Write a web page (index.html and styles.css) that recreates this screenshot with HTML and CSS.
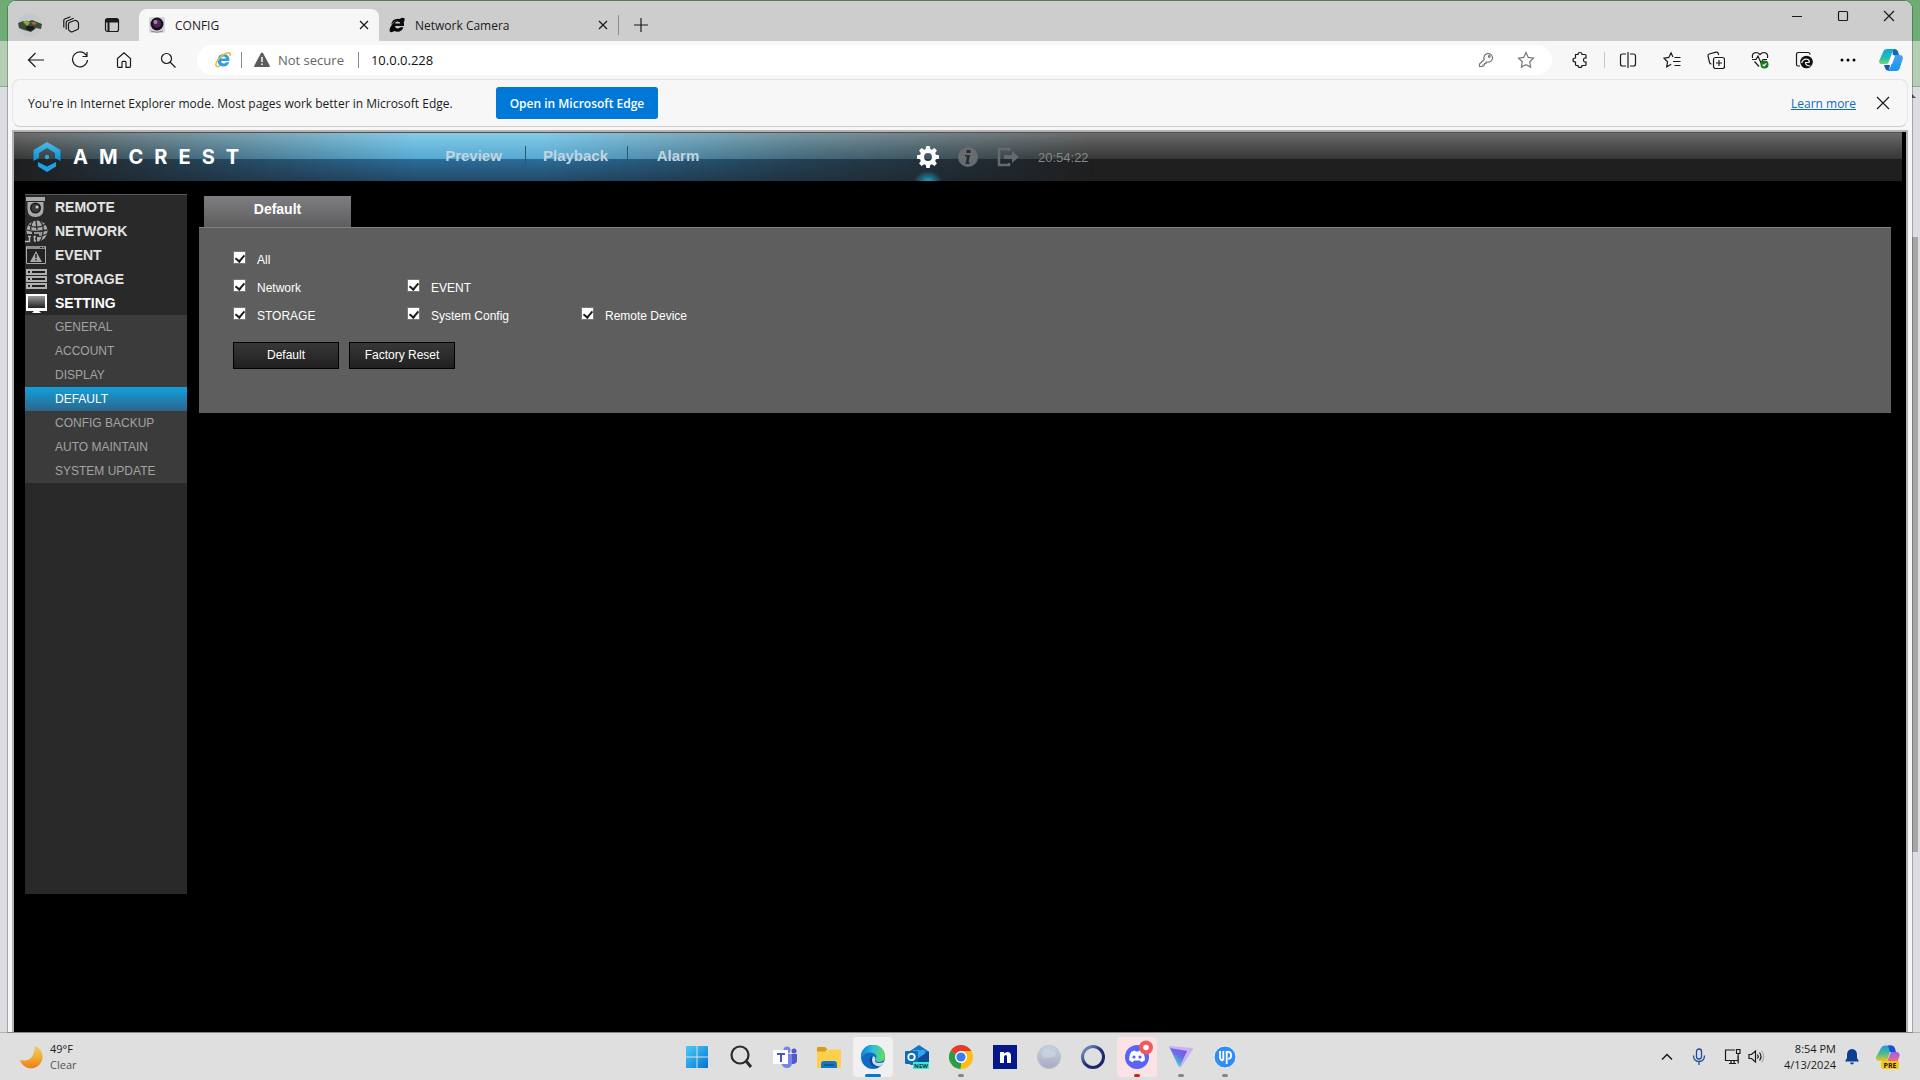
FILE: index.html
```html
<!DOCTYPE html>
<html lang="en">
<head>
<meta charset="utf-8">
<title>CONFIG</title>
<link rel="stylesheet" href="styles.css">
</head>
<body>
<div class="desktop">
  <div class="back-thumb"></div>
  <div class="back-arrow"></div>
  <main class="window">
    <header class="tabstrip">
      <button class="strip-btn" aria-label="Profile"><svg width="24" height="24" viewBox="0 0 24 24"><circle cx="12" cy="12" r="12" fill="#c3c8cc"/><path d="M0 10l5-2 4 1 5-2 5 2 5 2-1 5-5-1-5 4-7-2-5-2z" fill="#3d4a35"/><path d="M5 9l4-2 3 3-3 3z" fill="#8fa343"/><path d="M8 13h7l2 3-5 2-4-2z" fill="#181b1a"/><path d="M13 9h4l2 2-4 1z" fill="#a5673f"/></svg></button>
      <button class="strip-btn" aria-label="Workspaces"><svg class="line" width="18" height="18" viewBox="0 0 18 18"><path d="M6.500 8q0-1 1-1.500l5-2q1.200-.3 2 .3l1.200 1q.8.600.8 1.700V12q0 1-1 1.500l-5 2.300q-1 .4-2-.3l-1.200-.9q-.8-.6-.8-1.600zM4.200 13.500V6.500q0-1 1-1.500l6.500-2.800M1.800 11.500V4.500q0-1 1-1.500L8.500.8"/></svg></button>
      <button class="strip-btn" aria-label="Tab actions"><svg class="line" width="16" height="16" viewBox="0 0 16 16"><rect x="1.500" y="1.500" width="13" height="13" rx="2"/><path d="M1.500 3h13M1.500 4.500h13M4.500 5v9.500" stroke-width="2"/></svg></button>
      <div class="tab tab-active">
        <svg width="16" height="16" viewBox="0 0 16 16"><rect width="16" height="16" rx="2" fill="#d6d6da"/><circle cx="8" cy="7" r="6.500" fill="#16131b"/><circle cx="8" cy="6.500" r="4" fill="#4c2458"/><circle cx="6.500" cy="5" r="2" fill="#b47bb8"/><path d="M2 14q6 2.500 12 0" stroke="#888" fill="none"/></svg>
        <span class="tab-title">CONFIG</span>
        <button class="tab-close" aria-label="Close tab"><svg class="line" width="10" height="10" viewBox="0 0 10 10"><path d="M1 1l8 8M9 1l-8 8"/></svg></button>
      </div>
      <div class="tab">
        <svg width="16" height="16" viewBox="0 0 16 16"><path d="M14.800 9H6q.3 2.500 2.700 2.500 1.500 0 2.300-1.200h3.500Q12.800 14.700 8.600 14.700q-2 0-3.300-.8Q1.700 16 .8 14.500-.2 12 3 7.500 6 3.800 9 2.800 5.200 4 2.200 7.800 3 1.700 8.800 1.700q.8 0 1.600.2Q14.500-.2 15.500 1.500q.6 1.400-.8 3.800.6 1.600.1 3.700zM6 6.500h5.300Q11 4.500 8.700 4.500 6.500 4.500 6 6.500z" fill="#0a0a0a"/></svg>
        <span class="tab-title">Network Camera</span>
        <button class="tab-close" aria-label="Close tab"><svg class="line" width="10" height="10" viewBox="0 0 10 10"><path d="M1 1l8 8M9 1l-8 8"/></svg></button>
      </div>
      <button class="new-tab" aria-label="New tab"><svg class="line" width="16" height="16" viewBox="0 0 16 16"><path d="M8 1v14M1 8h14"/></svg></button>
      <div class="window-controls">
        <button aria-label="Minimize"><svg class="line" width="12" height="12" viewBox="0 0 12 12"><path d="M1 6.500h10"/></svg></button>
        <button aria-label="Maximize"><svg class="line" width="12" height="12" viewBox="0 0 12 12"><rect x="1.500" y="1.500" width="9" height="9" rx="1"/></svg></button>
        <button aria-label="Close"><svg class="line" width="12" height="12" viewBox="0 0 12 12"><path d="M1 1l10 10M11 1L1 11"/></svg></button>
      </div>
    </header>

    <nav class="toolbar">
      <button class="tool" aria-label="Back"><svg class="line" width="18" height="18" viewBox="0 0 18 18"><path d="M17 9H2M8.500 2L1.500 9l7 7"/></svg></button>
      <button class="tool" aria-label="Refresh"><svg class="line" width="18" height="18" viewBox="0 0 18 18"><path d="M15.500 4.500A7.500 7.500 0 1 0 16.500 9M16 1v4.500h-4.500"/></svg></button>
      <button class="tool" aria-label="Home"><svg class="line" width="18" height="18" viewBox="0 0 18 18"><path d="M2.500 7.500L9 1.800l6.500 5.700v8q0 .8-.8.800H11v-5q0-1-1-1H8q-1 0-1 1v5H3.300q-.8 0-.8-.8z"/></svg></button>
      <button class="tool" aria-label="Search"><svg class="line" width="18" height="18" viewBox="0 0 18 18"><circle cx="7.500" cy="7.500" r="5"/><path d="M11 11l5.500 5.500"/></svg></button>
      <div class="address">
        <svg width="16" height="16" viewBox="0 0 16 16"><path d="M14.500 9H6q.3 2.500 2.700 2.500 1.500 0 2.300-1.200h3.300Q12.800 14.500 8.600 14.500 2.600 14.500 2.600 8.200 3 2 8.700 2q6.200.4 5.800 7zM6 6.600h5Q10.800 4.600 8.600 4.600 6.400 4.600 6 6.600z" fill="#2f9fe0"/><path d="M14.800 4Q16 .8 13.500.8 9.500 1 5 5.500 .7 10 .8 13.200q.5 2.300 4 .8" fill="none" stroke="#f2b632" stroke-width="1.500"/></svg>
        <span class="bar"></span>
        <svg class="warn" width="16" height="16" viewBox="0 0 16 16"><path d="M8 .5q.7 0 1 .6l6.800 12.600q.5 1.300-.8 1.300H1Q-.3 15 .2 13.700L7 1.100Q7.300.5 8 .5z" fill="#5c5c5c"/><path d="M8 5v5M8 11.500v1.500" stroke="#fff" stroke-width="1.500"/></svg>
        <span class="secure">Not secure</span>
        <span class="bar"></span>
        <input class="url" type="text" value="10.0.0.228" aria-label="Address">
        <button class="pill-btn" aria-label="Passwords"><svg class="line dim" width="16" height="16" viewBox="0 0 16 16"><path d="M6.200 7.500A4.300 4.300 0 1 1 9 10H8v1.500H6.500V13H5v1.500H1.500V12z"/><circle cx="11.300" cy="4.500" r=".8"/></svg></button>
        <button class="pill-btn" aria-label="Add to favorites"><svg class="line dim" width="18" height="18" viewBox="0 0 18 18"><path d="M9 1.500l2.300 4.900 5.200.7-3.800 3.700.9 5.300L9 13.600l-4.600 2.500.9-5.300L1.500 7.100l5.200-.7z"/></svg></button>
      </div>
      <button class="tool tool-ext" aria-label="Extensions"><svg class="line" width="18" height="18" viewBox="0 0 18 18"><path d="M4.500 3.500H7Q7 1.500 9 1.500t2 2h3q1 0 1 1V7Q12.500 6.700 12.500 9t2.500 2v2.500q0 1-1 1h-3q0 2-2 2t-2-2H5.500q-1 0-1-1V11Q2 11 2 9t2.500-2z"/></svg></button>
      <span class="bar bar-light"></span>
      <button class="tool" aria-label="Split screen"><svg class="line" width="18" height="18" viewBox="0 0 18 18"><path d="M7 3H3.500q-2 0-2 2v8q0 2 2 2H7M11 3h3.500q2 0 2 2v8q0 2-2 2H11M9 1v16"/></svg></button>
      <button class="tool" aria-label="Favorites"><svg class="line" width="18" height="18" viewBox="0 0 18 18"><path d="M10 6L8 1.800 5.800 6.400 1 7.200l3.500 3.600-.8 5 4.500-2.500M11.500 6.500h6M10 10.500h7.500M11.500 14.500h6"/></svg></button>
      <button class="tool" aria-label="Collections"><svg class="line" width="18" height="18" viewBox="0 0 18 18"><rect x="6.500" y="6.500" width="11" height="11" rx="2"/><path d="M12 9v6M9 12h6M4.500 13Q3 13 2.500 11.500L1 5Q.8 3.500 2.200 3L9 1.200q1.700-.2 2.200 1L11.700 4"/></svg></button>
      <button class="tool" aria-label="Browser essentials"><svg class="line" width="18" height="18" viewBox="0 0 18 18"><path d="M1.500 7Q.5 2 5 1.500q2.300 0 4 2 1.700-2 4-2Q17.500 2 16.500 7M1 8.500h4L7 5l3 7 2-3.500h4M3.500 10.500L8 15.500"/><circle cx="13.500" cy="13.500" r="4" fill="#187a1c" stroke="none"/><path d="M11.700 13.500l1.300 1.300 2.300-2.500" stroke="#fff"/></svg></button>
      <button class="tool" aria-label="Internet Explorer mode"><svg class="line" width="18" height="18" viewBox="0 0 18 18"><path d="M5 15H3q-1.500 0-1.500-1.500v-10Q1.500 1.500 3.500 1.500h9.500q2 0 2 2"/><circle cx="11.500" cy="11" r="6.300" fill="#111" stroke="none"/><path d="M6.500 12Q8.500 7 13 8.500q2 1.500 1 3h-3.500q0 3.500 5 3.500" stroke="#f7f7f7" stroke-width="1.200"/></svg></button>
      <button class="tool" aria-label="Settings and more"><svg width="18" height="18" viewBox="0 0 18 18"><circle cx="3" cy="9" r="1.500"/><circle cx="9" cy="9" r="1.500"/><circle cx="15" cy="9" r="1.500"/></svg></button>
      <button class="tool tool-last" aria-label="Copilot"><svg width="24" height="24" viewBox="0 0 24 24"><defs><linearGradient id="cpa" x1="0" y1="0" x2="0" y2="1"><stop offset="0" stop-color="#09a9dc"/><stop offset=".6" stop-color="#27bdb0"/><stop offset="1" stop-color="#74d678"/></linearGradient><linearGradient id="cpb" x1="0" y1="0" x2="0" y2="1"><stop offset="0" stop-color="#4aa0ea"/><stop offset="1" stop-color="#1595f5"/></linearGradient></defs><path d="M13 1h3q2 0 3 2.500L20 7h-6z" fill="#1565b8"/><path d="M4 4q1-3 4-3h8q-2 .5-2.800 3L11 12q-1 4-4 4H3Q-.5 16 .3 12.500z" fill="url(#cpa)"/><path d="M5 17h6l-1 5.500Q7 23 6 20z" fill="#1855c5"/><path d="M15.500 7H21q3.500.5 2.700 4L21 19.500q-1 3.500-4 3.500H8q2.500-.5 3.300-3.500z" fill="url(#cpb)"/><path d="M12 8h4l-3 8H9z" fill="#fff"/></svg></button>
    </nav>

    <section class="infobar">
      <span>You're in Internet Explorer mode. Most pages work better in Microsoft Edge.</span>
      <button class="open-edge">Open in Microsoft Edge</button>
      <a class="learn" href="#">Learn more</a>
      <button class="info-close" aria-label="Dismiss"><svg class="line" width="14" height="14" viewBox="0 0 14 14"><path d="M1 1l12 12M13 1L1 13"/></svg></button>
    </section>

    <div class="page">
      <header class="cam-header">
        <svg class="cam-mark" width="28" height="30" viewBox="0 0 28 30"><defs><linearGradient id="am" x1="0" y1="0" x2="0" y2="1"><stop offset="0" stop-color="#4cbce8"/><stop offset="1" stop-color="#0a8fd4"/></linearGradient></defs><path d="M.5 19V8L14 0l13.500 8v11L22 16v-5l-8-5-8 5v5z" fill="url(#am)"/><path d="M5 20l9 4.500L23 20v4.500L14 30l-9-5.500z" fill="#1ca0e2"/><circle cx="14" cy="15" r="2.200" fill="#29a8e0"/></svg>
        <span class="cam-name">AMCREST</span>
        <nav class="cam-nav"><a href="#">Preview</a><a href="#">Playback</a><a href="#">Alarm</a></nav>
        <div class="cam-tools">
          <button class="gear" aria-label="Setup"><svg width="22" height="22" viewBox="0 0 22 22"><path fill="#fff" fill-rule="evenodd" d="M9.300 0h3.400l.5 3 1.700.7L17.400 2l2.500 2.500-1.700 2.600.7 1.600 3.100.6v3.400l-3.100.6-.7 1.600 1.700 2.600-2.500 2.500-2.500-1.700-1.700.7-.5 3H9.300l-.5-3-1.700-.7L4.600 20l-2.500-2.500 1.700-2.600-.7-1.600-3.100-.6V9.300l3.100-.6.700-1.600L2.100 4.500 4.600 2l2.500 1.700L8.800 3zM11 7a4 4 0 1 0 0 8 4 4 0 0 0 0-8z"/></svg></button>
          <button aria-label="Information"><svg width="20" height="20" viewBox="0 0 20 20"><circle cx="10" cy="10" r="10" fill="#676c71"/><path d="M8.500 3h4v3h-4zM7 8h5l-1.500 7H12l-1 2H7.500L9 9.500H7z" fill="#262c33"/></svg></button>
          <button aria-label="Logout"><svg width="22" height="20" viewBox="0 0 22 20"><path d="M12 4V2H2v16h10v-2" fill="none" stroke="#666a6e" stroke-width="2.500"/><path d="M7 8h8V4l7 6-7 6v-4H7z" fill="#666a6e"/></svg></button>
          <span class="clock">20:54:22</span>
        </div>
      </header>

      <div class="cam-body">
        <aside class="side">
          <ul class="side-main">
            <li><a href="#"><svg width="24" height="24" viewBox="0 0 24 24"><path d="M1 2h19v4H1z" fill="#a9a9a9"/><path d="M2.500 7h16v7q0 8-8 8t-8-8z" fill="#a9a9a9"/><circle cx="10.500" cy="13" r="5.500" fill="#1c1c1c"/><circle cx="10.500" cy="13" r="4" fill="#3b3b3b"/><circle cx="12" cy="12" r="1.500" fill="#ccc"/></svg>REMOTE</a></li>
            <li><a href="#"><svg width="24" height="24" viewBox="0 0 24 24"><circle cx="12" cy="12" r="10.500" fill="#a9a9a9"/><path d="M4 6q8 5 17-1M2 11q9 3 20 0M8 2q-3 5-2 9M15 2q4 4 3 11t-3 9M11 1l1 10M17 17l5-2" stroke="#2a2a2a" stroke-width="1.300" fill="none"/><path d="M0 15h7v-3h9v6h-4v6H0z" fill="#2a2a2a"/><path d="M0 22.500h4.500V18M11 22h-1.500v-5M3 17.500h3M8.500 17.500H11M9 14h6v3" stroke="#b5b5b5" stroke-width="1.500" fill="none"/></svg>NETWORK</a></li>
            <li><a href="#"><svg width="24" height="24" viewBox="0 0 24 24"><path d="M1.500 3.500h19v17h-19z" fill="#222" stroke="#a9a9a9"/><path d="M2 3h18v3H2z" fill="#8e8e8e"/><path d="M15 4h2v1h-2zM18 4h1v1h-1z" fill="#222"/><path d="M11 8l6 11H5z" fill="#a9a9a9"/><path d="M11 11v4M11 16v1.500" stroke="#222" stroke-width="1.500"/></svg>EVENT</a></li>
            <li><a href="#"><svg width="24" height="24" viewBox="0 0 24 24"><path d="M1 2h21v6H1zM1 9h21v6H1zM1 16h21v6H1z" fill="#b0b0b0"/><path d="M3 4h2v2H3zM7 4h13v2H7zM3 11h2v2H3zM7 11h13v2H7zM3 18h2v2H3zM7 18h13v2H7z" fill="#1d1d1d"/></svg>STORAGE</a></li>
            <li><a class="on" href="#"><svg width="24" height="24" viewBox="0 0 24 24"><defs><linearGradient id="mon" x1="0" y1="0" x2="0" y2="1"><stop offset="0" stop-color="#9a9a9a"/><stop offset="1" stop-color="#222"/></linearGradient></defs><path d="M1 3h21v17H1z" fill="#fff"/><path d="M3 5h17v12H3z" fill="url(#mon)"/><path d="M9 20h5l2 2H7z" fill="#fff"/></svg>SETTING</a></li>
          </ul>
          <ul class="side-sub">
            <li><a href="#">GENERAL</a></li>
            <li><a href="#">ACCOUNT</a></li>
            <li><a href="#">DISPLAY</a></li>
            <li><a class="on" href="#">DEFAULT</a></li>
            <li><a href="#">CONFIG BACKUP</a></li>
            <li><a href="#">AUTO MAINTAIN</a></li>
            <li><a href="#">SYSTEM UPDATE</a></li>
          </ul>
        </aside>
        <section class="content">
          <h1 class="content-tab">Default</h1>
          <form class="panel">
            <div class="row"><label><input type="checkbox" checked>All</label></div>
            <div class="row"><label><input type="checkbox" checked>Network</label><label><input type="checkbox" checked>EVENT</label></div>
            <div class="row"><label><input type="checkbox" checked>STORAGE</label><label><input type="checkbox" checked>System Config</label><label><input type="checkbox" checked>Remote Device</label></div>
            <div class="actions"><button type="button">Default</button><button type="button">Factory Reset</button></div>
          </form>
        </section>
      </div>
    </div>
  </main>
</div>

<footer class="taskbar">
  <div class="weather">
    <svg width="24" height="24" viewBox="0 0 24 24"><defs><linearGradient id="mo" x1="0" y1="0" x2="0" y2="1"><stop offset="0" stop-color="#f5c66a"/><stop offset=".5" stop-color="#efb131"/><stop offset="1" stop-color="#ee7a1c"/></linearGradient></defs><path d="M16 1a11.500 11.500 0 1 1-15 14Q15 18 16 1z" fill="url(#mo)"/></svg>
    <div class="weather-text"><span>49°F</span><span class="muted">Clear</span></div>
  </div>
  <div class="apps">
    <button aria-label="Start"><svg width="24" height="24" viewBox="0 0 24 24"><defs><linearGradient id="wi" gradientUnits="userSpaceOnUse" x1="0" y1="0" x2="24" y2="24"><stop offset="0" stop-color="#4fd0fb"/><stop offset="1" stop-color="#0070cf"/></linearGradient></defs><path d="M1 1h10.500v10.500H1zM12.500 1H23v10.500H12.500zM1 12.500h10.500V23H1zM12.500 12.500H23V23H12.500z" fill="url(#wi)"/></svg></button>
    <button aria-label="Search"><svg width="24" height="24" viewBox="0 0 24 24" fill="none" stroke="#2b2b2b" stroke-width="2.200"><circle cx="11" cy="10" r="8.500"/><path d="M17 16l5 6" stroke-width="3"/></svg></button>
    <button aria-label="Teams"><svg width="26" height="24" viewBox="0 0 26 24"><circle cx="15" cy="5" r="3.500" fill="#7b83eb"/><circle cx="22" cy="6" r="2.500" fill="#5059c9"/><path d="M18 9h7v6q0 4-4 4h-3z" fill="#5059c9"/><path d="M10 9h10v8q0 6-5 6t-6-6z" fill="#7b83eb"/><path d="M1 5h15v14H1z" fill="#fff"/><path d="M5 8h8v2h-3v7H8v-7H5z" fill="#4b53bc"/></svg></button>
    <button aria-label="File Explorer"><svg width="26" height="24" viewBox="0 0 26 24"><path d="M1 3q0-1 1-1h7l3 3h-2v4H1z" fill="#d79b14"/><path d="M1 6.500h10l2-2h11q1 0 1 1V22q0 1-1 1H2q-1 0-1-1z" fill="#fcd04a"/><path d="M5 23v-4q0-3 3-3h10q3 0 3 3v4z" fill="#1178c8"/><path d="M8 19h10v2H8z" fill="#0c5a9c"/></svg></button>
    <button class="current run" aria-label="Microsoft Edge"><svg width="24" height="24" viewBox="0 0 24 24"><defs><linearGradient id="ed" x1="0" y1=".3" x2="1" y2=".4"><stop offset="0" stop-color="#0d7fd6"/><stop offset=".5" stop-color="#2fc2d8"/><stop offset="1" stop-color="#65dc59"/></linearGradient></defs><circle cx="12" cy="12" r="12" fill="#0f6cc4"/><path d="M0 12A12 12 0 0 1 24 11q0 6-6.500 6-4-.5-3-3 1.500-2 .5-4-2-3-7-2.500T0 14z" fill="url(#ed)"/><path d="M15.500 17.500q4 1.500 7.500-1-2.500 5-7 6-7-1-7.500-7Q8.500 12 12 10.500 9.500 16 15.500 17.500z" fill="#0d4b94"/><path d="M12 11q3 1 2 4-.5 2 2.500 3 4 .5 7-1.500-2 4-5 5-8-1-7.500-7z" fill="#eef5fa" opacity=".85"/></svg></button>
    <button aria-label="Outlook"><svg width="26" height="24" viewBox="0 0 26 24"><path d="M6 6l9-6 9 6v14H6z" fill="#1275c9"/><path d="M9 5h12v9H9z" fill="#2fa5ec"/><path d="M13 14L25 6v11H13z" fill="#0e4c96"/><rect x="1" y="6" width="13" height="13" rx="1" fill="#0f6cbd"/><circle cx="7.500" cy="12" r="3.200" fill="none" stroke="#fff" stroke-width="1.800"/><path d="M9 17h16v7H9z" fill="#3fe5df"/><text x="10" y="23" font-size="6" font-weight="700" font-family="Open Sans, sans-serif" fill="#0b3533">NEW</text></svg></button>
    <button class="run" aria-label="Chrome"><svg width="24" height="24" viewBox="0 0 24 24"><circle cx="12" cy="12" r="12" fill="#fbbf16"/><path d="M12 12L1.600 6A12 12 0 0 1 22.400 6z" fill="#e33b2e"/><path d="M12 12l0 12A12 12 0 0 1 1.600 6z" fill="#2a9d4a"/><path d="M12 6h10.400L18 15l-6 9-1-1 6-9z" fill="#fbbf16"/><circle cx="12" cy="12" r="6" fill="#fff"/><circle cx="12" cy="12" r="4.600" fill="#3b7ded"/></svg></button>
    <button aria-label="N app"><svg width="24" height="24" viewBox="0 0 24 24"><path d="M0 0h24v24H0z" fill="#04188c"/><path d="M7 18V7h4v1.500Q12.500 7 14.500 7q3.500 0 3.500 4v7h-4v-6.500Q14 10 12.700 10T11 11.800V18z" fill="#fff"/></svg></button>
    <button aria-label="Moon app"><svg width="24" height="24" viewBox="0 0 24 24"><defs><linearGradient id="pl" x1="0" y1="0" x2="0" y2="1"><stop offset="0" stop-color="#c5d5e2"/><stop offset="1" stop-color="#aaa9c2"/></linearGradient></defs><circle cx="12" cy="12" r="11.500" fill="url(#pl)" stroke="#b6c0cb"/><path d="M5 7q4-4 7-2t6 2q2 4-2 5T8 13 5 7z" fill="#d8e3ea" opacity=".4"/></svg></button>
    <button aria-label="Ring app"><svg width="24" height="24" viewBox="0 0 24 24"><defs><linearGradient id="rg" x1="0" y1="0" x2="1" y2="1"><stop offset="0" stop-color="#7fa7d0"/><stop offset=".5" stop-color="#25307a"/><stop offset="1" stop-color="#181c6a"/></linearGradient></defs><circle cx="12" cy="12" r="10.500" fill="none" stroke="url(#rg)" stroke-width="3"/></svg></button>
    <button class="alert run" aria-label="Discord"><svg width="40" height="40" viewBox="0 0 40 40"><circle cx="20" cy="20" r="12" fill="#5865f2"/><path d="M14 15q2-1.500 4-1.500l.5 1h3l.5-1q2 0 4 1.500 2 4 2 8-2 2-4 2l-1-1.500h-6L16 25q-2 0-4-2 0-4 2-8z" fill="#fff"/><circle cx="17" cy="20" r="1.600" fill="#5865f2"/><circle cx="23" cy="20" r="1.600" fill="#5865f2"/><circle cx="29" cy="10.500" r="7" fill="#f05a5a"/><circle cx="29" cy="10.500" r="2.800" fill="#fff"/></svg></button>
    <button class="run" aria-label="VPN"><svg width="24" height="24" viewBox="0 0 24 24"><defs><linearGradient id="vp" x1="1" y1="0" x2=".3" y2="1"><stop offset="0" stop-color="#8b45e8"/><stop offset=".5" stop-color="#6770e6"/><stop offset="1" stop-color="#45e3c8"/></linearGradient></defs><path d="M0 2q0-1 1-1l22 2q1.500.5.700 2L12 22q-1 1.500-2 0z" fill="#c9b1f2"/><path d="M1 3l17 3-7 15q-1 1-2-1z" fill="url(#vp)"/></svg></button>
    <button class="run" aria-label="IP utility"><svg width="24" height="24" viewBox="0 0 24 24"><circle cx="12" cy="12" r="11" fill="#2f8df3" stroke="#f0f6fd"/><path d="M7 6v6q0 3 3 3.500M10.300 6v9.500M13.700 19V6.800h1.500q3 .2 3 3.400t-3 3.800" stroke="#fff" stroke-width="1.800" fill="none"/></svg></button>
  </div>
  <div class="tray">
    <button class="chev" aria-label="Hidden icons"><svg class="line" width="12" height="12" viewBox="0 0 12 12"><path d="M1 8.500l5-5 5 5" stroke-width="1.500"/></svg></button>
    <button class="mic" aria-label="Microphone"><svg width="14" height="18" viewBox="0 0 14 18" fill="none" stroke="#1a4fa0" stroke-width="1.300"><rect x="4.500" y="1" width="5" height="10" rx="2.500"/><path d="M1.500 7.500q0 6 5.500 6t5.500-6M7 13.500V17"/></svg></button>
    <button class="net" aria-label="Network and volume"><svg class="line" width="17" height="17" viewBox="0 0 17 17"><path d="M11 2H1.500v10.500H14V8M5 15.500h7M7 13v2.500M10 13v2.500M12.500 1.500h3.500v4h-3.500zM14.200 5.500v10"/></svg><svg class="line" width="17" height="17" viewBox="0 0 17 17"><path d="M1 6.500h2.500L7.500 3v11L3.500 10.500H1zM9.500 6.500q1.500 2 0 4M11.500 4.500q3 4 0 8"/><path d="M13.500 2.500q4.500 6 0 12" stroke="#aaa"/></svg></button>
    <div class="datetime"><span>8:54 PM</span><span>4/13/2024</span></div>
    <svg class="bell" width="16" height="16" viewBox="0 0 16 16"><path d="M8 0q5 .5 5 6v3l2 3.500H1L3 9V6q0-5.500 5-6zM6 13.500h4Q9.500 15.500 8 15.500T6 13.500z" fill="#0a3f93"/></svg>
    <svg width="24" height="24" viewBox="0 0 24 24"><defs><linearGradient id="c1" x1="0" y1="0" x2="0" y2="1"><stop offset="0" stop-color="#1a9bea"/><stop offset=".5" stop-color="#4bb98e"/><stop offset="1" stop-color="#e8c72a"/></linearGradient><linearGradient id="c2" x1="0" y1="0" x2="0" y2="1"><stop offset="0" stop-color="#a05be8"/><stop offset="1" stop-color="#f4717e"/></linearGradient></defs><path d="M5 3q1-2.500 4-2.500h6q2 0 3 2.500l1 4h-5l-3 9H3q-3.500 0-3-4z" fill="url(#c1)"/><path d="M12 .5h4q2 0 3 3L20 7h-6z" fill="#1b50d4"/><path d="M15 7h5q4 0 3.500 4l-2 6H11z" fill="url(#c2)"/><rect x="5" y="16" width="18" height="8" rx="2" fill="#fdc60c"/><text x="7.500" y="22.500" font-size="7" font-weight="700" font-family="Open Sans, sans-serif" fill="#222">PRE</text></svg>
  </div>
</footer>
</body>
</html>
```
FILE: styles.css
```css
* { box-sizing: border-box; }

body {
  margin: 0;
  height: 100vh;
  display: flex;
  flex-direction: column;
  overflow: hidden;
  font-family: "Open Sans", "Noto Sans", sans-serif;
  font-size: 12px;
  color: #1b1b1b;
}

button {
  display: flex;
  align-items: center;
  justify-content: center;
  padding: 0;
  border: 0;
  background: none;
  font: inherit;
  color: inherit;
}

svg { display: block; flex: none; }
.line { fill: none; stroke: #1a1a1a; stroke-width: 1.2; }
.dim { stroke: #777; }

/* Desktop with the window that lies behind the browser */
.desktop {
  position: relative;
  flex: 1;
  min-height: 0;
  display: flex;
  padding: 1px 8px 0;
  background: linear-gradient(#6fac73 0 41px, #b4cfb4 41px 86px, #97a997 86px 87px, #dcdde1 87px);
}

.back-thumb {
  position: absolute;
  top: 237px;
  right: 2px;
  width: 6px;
  height: 615px;
  background: #a5a5a5;
}

.back-arrow {
  position: absolute;
  top: 94px;
  right: 4px;
  border: 4px solid transparent;
  border-top-width: 0;
  border-bottom-color: #555;
}

.window {
  position: relative;
  flex: 1;
  display: flex;
  flex-direction: column;
  min-width: 0;
  border-radius: 8px 8px 0 0;
  background: #f7f7f7;
  overflow: hidden;
  box-shadow: 0 0 0 1px rgba(0, 0, 0, .25);
}

/* Tab strip */
.tabstrip {
  display: flex;
  height: 40px;
  padding-left: 1px;
  background: #cdcdcd;
}

.strip-btn { width: 41px; padding-top: 8px; }

.tab {
  display: flex;
  align-items: center;
  gap: 10px;
  width: 239px;
  margin-top: 8px;
  padding: 0 10px;
}

.tab-active {
  width: 240px;
  margin-left: 7px;
  border-radius: 8px 8px 0 0;
  background: #f7f7f7;
}

.tab-title { flex: 1; }
.tab-close { width: 10px; height: 10px; }

.new-tab {
  width: 44px;
  height: 20px;
  margin-top: 14px;
  border-left: 1px solid #8c8c8c;
}

.window-controls { display: flex; margin-left: auto; }
.window-controls button { width: 46px; height: 30px; }

/* Toolbar */
.toolbar {
  display: flex;
  align-items: center;
  height: 38px;
  padding-left: 6px;
}

.tool { width: 44px; height: 32px; }
.tool-ext { margin-left: 6px; }
.tool-last { width: 42px; }

.address {
  flex: 1;
  display: flex;
  align-items: center;
  height: 30px;
  margin-left: 7px;
  padding: 0 6px 0 18px;
  border-radius: 15px;
  background: #fff;
  font-size: 13px;
}

.bar { width: 1px; height: 16px; margin: 0 12px 0 10px; background: #8a8a8a; }
.secure + .bar { margin-left: 14px; }
.toolbar .bar-light { margin: 0 1px 0 2px; background: #c6c6c6; }
.secure { margin-left: 8px; color: #666; }

.url {
  flex: 1;
  min-width: 0;
  padding: 0;
  border: 0;
  outline: 0;
  background: none;
  font: inherit;
  color: #111;
}

.pill-btn { width: 40px; height: 28px; }

/* Internet Explorer mode notice */
.infobar {
  display: flex;
  align-items: center;
  height: 48px;
  margin: 0 4px;
  padding: 0 11px 0 15px;
  border: 1px solid #e4e4e4;
  border-bottom-color: #cfcfcf;
  border-radius: 8px;
}

.open-edge {
  height: 32px;
  margin-left: 43px;
  padding: 0 14px;
  border-radius: 3px;
  background: #0078d7;
  color: #fff;
  font-weight: 600;
}

.learn { margin-left: auto; color: #0f6cbd; }
.info-close { width: 26px; height: 26px; margin-left: 14px; }

/* Camera page */
.page {
  flex: 1;
  min-height: 0;
  margin: 3px 4px 0;
  border: 2px solid #b4b4b4;
  border-bottom: 0;
  background: #000;
  color: #fff;
  font-family: "Liberation Sans", Arial, sans-serif;
  overflow: hidden;
}

.cam-header {
  position: relative;
  display: flex;
  align-items: center;
  height: 49px;
  margin-right: 4px;
  padding-left: 19px;
  border-top: 1px solid #55504d;
  background: linear-gradient(#6c6c6c, #504f4e 13px, #353736 26px, #1f1f1f 26px);
}

.cam-header::before {
  content: "";
  position: absolute;
  inset: 0;
  background: linear-gradient(#84cbe8, #55a9d2 26px, #2b6d9a 26px, #234a69);
  -webkit-mask-image: linear-gradient(90deg, transparent, #000 400px, #000 530px, rgba(0, 0, 0, .45) 780px, transparent 1080px);
  mask-image: linear-gradient(90deg, transparent, #000 400px, #000 530px, rgba(0, 0, 0, .45) 780px, transparent 1080px);
}

.cam-header > * { position: relative; }

.cam-name {
  width: 185px;
  margin-left: 12px;
  font: 700 20px/24px Inter, "Open Sans", sans-serif;
  letter-spacing: 11px;
}

.cam-nav { display: flex; margin-left: 166px; padding-bottom: 2px; }

.cam-nav a {
  width: 102px;
  padding-right: 2px;
  border-right: 1px solid #2b5674;
  color: #c3d4df;
  font-size: 15px;
  font-weight: 700;
  line-height: 20px;
  text-align: center;
  text-decoration: none;
}

.cam-nav a:last-child { border: 0; }

.cam-tools { display: flex; align-items: center; height: 48px; margin-left: 178px; }
.cam-tools button { width: 40px; height: 48px; }
.cam-tools .gear { background: radial-gradient(ellipse 14px 10px at 50% 100%, #1ba0c4, transparent); }
.clock { margin-left: 10px; color: #85878a; font-size: 13px; }

.cam-body { display: flex; gap: 12px; padding: 13px 15px 0 11px; }

.side {
  width: 162px;
  min-height: 700px;
  border-top: 1px solid #5a5a5a;
  background: #292929;
}

.side ul { margin: 0; padding: 0; list-style: none; }
.side a { display: flex; align-items: center; height: 24px; text-decoration: none; }
.side-main a { gap: 6px; color: #e4e4e4; font-size: 14px; font-weight: 700; }
.side-main .on { color: #fff; }
.side-sub { background: #3b3b3b; }
.side-sub a { padding-left: 30px; color: #a3a3a3; }
.side-sub .on { background: linear-gradient(#12a0dc, #2c658c); color: #fff; }

.content { flex: 1; padding-top: 2px; }

.content-tab {
  width: 147px;
  height: 31px;
  margin: 0 0 0 5px;
  background: linear-gradient(#7e7d82, #5e5e5e);
  font-size: 14px;
  line-height: 26px;
  text-align: center;
}

.panel {
  height: 186px;
  padding: 18px 34px;
  border-top: 1px solid #828282;
  background: #5e5e5e;
}

.row { display: flex; height: 28px; }
.row label { display: flex; align-items: center; gap: 11px; width: 174px; }

.row input {
  appearance: none;
  width: 13px;
  height: 13px;
  margin: 0 0 5px;
  border: 1px solid #777;
  background: #fff;
}

.row input:checked::before {
  content: "";
  display: block;
  width: 4px;
  height: 7px;
  margin: 1px auto 0;
  border: solid #222;
  border-width: 0 2px 2px 0;
  transform: rotate(40deg);
}

.actions { display: flex; gap: 10px; padding-top: 12px; }

.actions button {
  width: 106px;
  height: 27px;
  padding-bottom: 2px;
  border: 1px solid #000;
  background: linear-gradient(#373737, #202020);
}

/* Taskbar */
.taskbar {
  display: grid;
  grid-template-columns: 1fr auto 1fr;
  align-items: center;
  height: 48px;
  padding-left: 1px;
  border-top: 1px solid #b3b3b3;
  background: #dfdfdf;
  font-size: 11px;
  line-height: 16px;
}

.weather { display: flex; gap: 7px; align-items: center; padding-left: 18px; }
.weather-text, .datetime { display: flex; flex-direction: column; }
.muted { color: #555; }

.apps { display: flex; gap: 4px; }
.apps button { position: relative; width: 40px; height: 40px; border-radius: 4px; }
.apps .current { background: #f0f0f0; }
.apps .alert { background: #fbe3e5; }

.run::after {
  content: "";
  position: absolute;
  bottom: 0;
  width: 6px;
  height: 3px;
  border-radius: 2px;
  background: #858585;
}

.current::after { width: 16px; background: #0078d7; }
.alert::after { background: #c42b1c; }

.tray { display: flex; align-items: center; justify-content: flex-end; padding-right: 20px; }
.mic { margin-left: 19px; }
.net { gap: 7px; margin-left: 18px; }
.datetime { margin-left: 19px; text-align: right; }
.bell { margin: 0 16px 0 8px; }
```
